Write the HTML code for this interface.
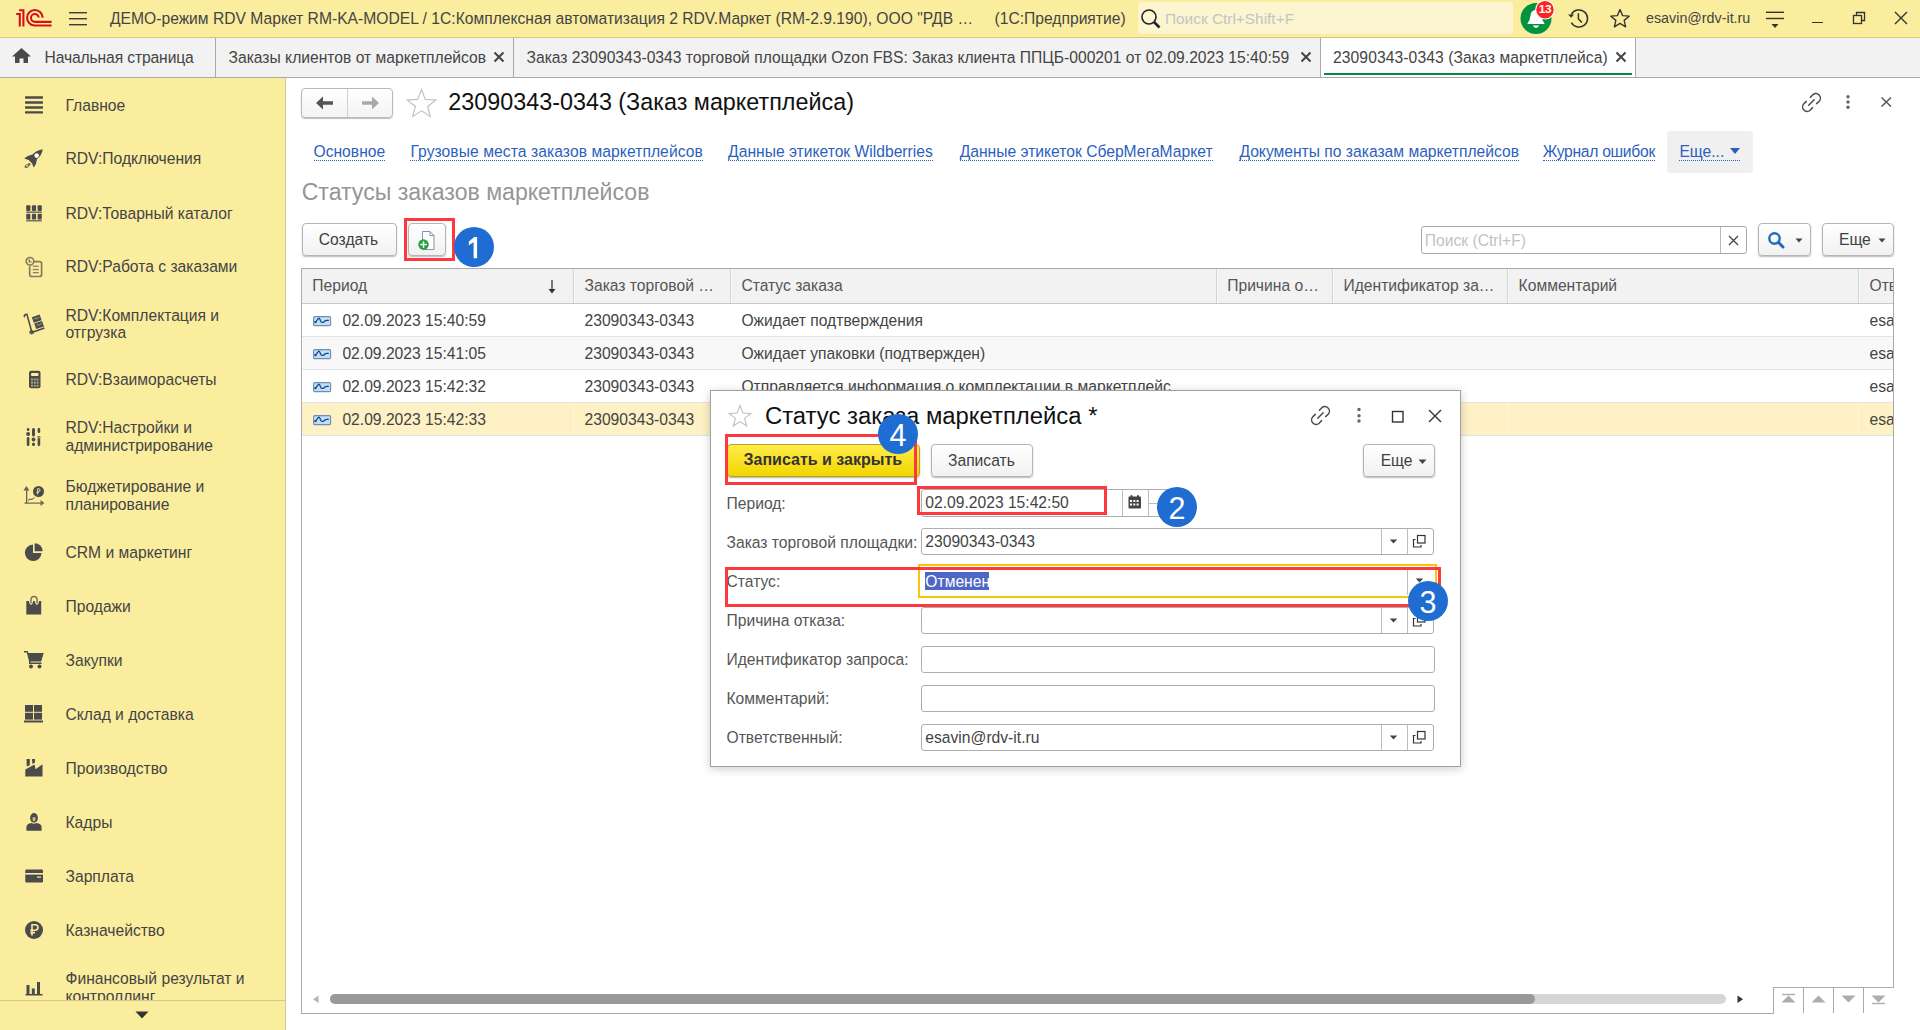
<!DOCTYPE html>
<html><head><meta charset="utf-8"><title>1C</title>
<style>
html,body{margin:0;padding:0;width:1920px;height:1030px;overflow:hidden;background:#fff;}
body{position:relative;font-family:"Liberation Sans",sans-serif;}
.a{position:absolute;}
.t{position:absolute;white-space:pre;}
.circ{width:40px;height:40px;border-radius:50%;background:#1f6cd3;color:#fff;font-size:30.5px;line-height:42px;text-align:center;font-family:"Liberation Sans",sans-serif;}
</style></head><body>
<div class="a" style="left:0px;top:0px;width:1920px;height:37px;background:#fbed9e;"></div>
<div class="a" style="left:0px;top:37px;width:1920px;height:1px;background:#d9c77a;"></div>
<svg class="a" style="left:12px;top:5px;" width="46" height="26" viewBox="0 0 46 26"><g fill="none" stroke="#d6101b" stroke-width="2.1">
<path d="M7.07 5.2 H11.4 V21.6"/><path d="M4.2 9 H7.8 V21.6"/>
<path d="M30.65 12.7 A7.8 7.8 0 1 0 22.85 20.55 H39.6"/>
<path d="M26.75 12.5 A3.9 3.9 0 1 0 22.85 16.85 H39.6"/>
</g></svg>
<svg class="a" style="left:69px;top:11px;" width="19" height="15" viewBox="0 0 19 15"><g fill="#3c3c3c"><rect x="0" y="1" width="18" height="1.4"/><rect x="0" y="7" width="18" height="1.4"/><rect x="0" y="13" width="18" height="1.4"/></g></svg>
<div class="t" style="left:110px;top:8.79px;font-size:15.65px;line-height:19.562px;color:#444444;">ДЕМО-режим RDV Маркет RM-KA-MODEL / 1С:Комплексная автоматизация 2 RDV.Маркет (RM-2.9.190), ООО "РДВ …</div>
<div class="t" style="left:994.5px;top:8.79px;font-size:15.65px;line-height:19.562px;color:#444444;">(1С:Предприятие)</div>
<div class="a" style="left:1138px;top:2px;width:375px;height:32px;background:#fdf5cf;border-radius:3px;"></div>
<svg class="a" style="left:1140px;top:8px;" width="22" height="22" viewBox="0 0 22 22"><circle cx="9" cy="9" r="7" fill="none" stroke="#222" stroke-width="1.6"/><path d="M14 14 L19.5 19.5" stroke="#222" stroke-width="2.6"/></svg>
<div class="t" style="left:1165px;top:9.04px;font-size:15.4px;line-height:19.25px;color:#c4c4c4;">Поиск Ctrl+Shift+F</div>
<svg class="a" style="left:1518px;top:0px;" width="40" height="37" viewBox="0 0 40 37"><circle cx="18" cy="18.5" r="15.5" fill="#03923f"/>
<path d="M9.3 24 Q12 21 12.5 15.5 Q13 10 18 10 Q23 10 23.5 15.5 Q24 21 26.7 24 Z" fill="#fff"/>
<path d="M14.6 25.6 H21.4 Q18 30.5 14.6 25.6Z" fill="#fff"/>
<circle cx="27" cy="9.7" r="9.3" fill="#fe2222" stroke="#ffffff" stroke-width="1.1"/></svg>
<div class="a" style="left:1535px;top:1px;width:20px;text-align:center;color:#fff;font-weight:700;font-size:11.8px;line-height:17px;letter-spacing:-0.2px;">13</div>
<svg class="a" style="left:1566px;top:6px;" width="26" height="26" viewBox="0 0 26 26"><g fill="none" stroke="#333" stroke-width="1.5"><path d="M5.4 8.4 A8.6 8.6 0 1 1 5.4 16.6"/><path d="M12.4 7.3 V13 L16 16.4"/></g><path d="M2.1 8.4 H8.1 L5.1 11.8 Z" fill="#333"/></svg>
<svg class="a" style="left:1608px;top:6px;" width="26" height="26" viewBox="0 0 26 26"><path d="M12 2.5 L14.9 9.3 L22.2 9.9 L16.6 14.6 L18.3 21.8 L12 18 L5.7 21.8 L7.4 14.6 L1.8 9.9 L9.1 9.3 Z" fill="none" stroke="#333" stroke-width="1.5" stroke-linejoin="round" transform="translate(12 12.5) scale(0.9) translate(-12 -12.5)"/></svg>
<div class="t" style="left:1646px;top:10.10px;font-size:14.3px;line-height:17.875px;color:#444444;">esavin@rdv-it.ru</div>
<svg class="a" style="left:1764px;top:10px;" width="22" height="20" viewBox="0 0 22 20"><g fill="#333"><rect x="2" y="1.6" width="18" height="1.4"/><rect x="2" y="7.8" width="18" height="1.4"/><path d="M7.5 14 H14.5 L11 18 Z"/></g></svg>
<div class="a" style="left:1812px;top:22px;width:11px;height:1.4px;background:#333;"></div>
<svg class="a" style="left:1852px;top:11px;" width="16" height="14" viewBox="0 0 16 14"><g fill="none" stroke="#333" stroke-width="1.3"><rect x="1.5" y="4.5" width="8" height="8"/><path d="M4.5 4.5 V1.5 H12.5 V9.5 H9.5"/></g></svg>
<svg class="a" style="left:1893px;top:10px;" width="16" height="16" viewBox="0 0 16 16"><path d="M2 2 L14 14 M14 2 L2 14" stroke="#333" stroke-width="1.4"/></svg>
<div class="a" style="left:0px;top:38px;width:1920px;height:39px;background:#f2f2f2;"></div>
<div class="a" style="left:0px;top:77px;width:1920px;height:1px;background:#a9a9a9;"></div>
<svg class="a" style="left:11px;top:47px;" width="21" height="18" viewBox="0 0 21 18"><path d="M10.5 1 L20 9.5 H17 V16 H12.5 V11.5 H8.5 V16 H4 V9.5 H1 Z" fill="#4a4a4a"/></svg>
<div class="t" style="left:44.5px;top:47.79px;font-size:15.65px;line-height:19.562px;color:#444444;letter-spacing:-0.12px;">Начальная страница</div>
<div class="a" style="left:215px;top:38px;width:1px;height:39px;background:#a9a9a9;"></div>
<div class="t" style="left:228.5px;top:47.79px;font-size:15.65px;line-height:19.562px;color:#444444;">Заказы клиентов от маркетплейсов</div>
<svg class="a" style="left:493px;top:51px;" width="12" height="12" viewBox="0 0 12 12"><path d="M1.5 1.5 L10.5 10.5 M10.5 1.5 L1.5 10.5" stroke="#444" stroke-width="2"/></svg>
<div class="a" style="left:513px;top:38px;width:1px;height:39px;background:#a9a9a9;"></div>
<div class="t" style="left:526.5px;top:47.79px;font-size:15.65px;line-height:19.562px;color:#444444;">Заказ 23090343-0343 торговой площадки Ozon FBS: Заказ клиента ППЦБ-000201 от 02.09.2023 15:40:59</div>
<svg class="a" style="left:1300px;top:51px;" width="12" height="12" viewBox="0 0 12 12"><path d="M1.5 1.5 L10.5 10.5 M10.5 1.5 L1.5 10.5" stroke="#444" stroke-width="2"/></svg>
<div class="a" style="left:1320px;top:38px;width:1px;height:39px;background:#a9a9a9;"></div>
<div class="a" style="left:1321px;top:38px;width:314px;height:39px;background:#ffffff;"></div>
<div class="t" style="left:1333px;top:47.79px;font-size:15.65px;line-height:19.562px;color:#444444;letter-spacing:0.09px;">23090343-0343 (Заказ маркетплейса)</div>
<svg class="a" style="left:1615px;top:51px;" width="12" height="12" viewBox="0 0 12 12"><path d="M1.5 1.5 L10.5 10.5 M10.5 1.5 L1.5 10.5" stroke="#444" stroke-width="2"/></svg>
<div class="a" style="left:1324px;top:73px;width:308px;height:2px;background:#008a3a;"></div>
<div class="a" style="left:1635px;top:38px;width:1px;height:39px;background:#a9a9a9;"></div>
<div class="a" style="left:0px;top:78px;width:285px;height:952px;background:#fbed9e;"></div>
<div class="a" style="left:285px;top:78px;width:1px;height:952px;background:#d5c98f;"></div>
<div class="a" style="left:0px;top:1000px;width:285px;height:1px;background:#d5c98f;"></div>
<svg class="a" style="left:134px;top:1010px;" width="16" height="10" viewBox="0 0 16 10"><path d="M1.5 1.5 H14.5 L8 8.5 Z" fill="#333"/></svg>
<div class="a" style="left:0;top:78px;width:285px;height:922px;overflow:hidden;">
<div class="t" style="left:65.5px;top:17.79px;font-size:15.65px;line-height:19.562px;color:#444444;">Главное</div>
<div class="t" style="left:65.5px;top:71.29px;font-size:15.65px;line-height:19.562px;color:#444444;">RDV:Подключения</div>
<div class="t" style="left:65.5px;top:125.59px;font-size:15.65px;line-height:19.562px;color:#444444;">RDV:Товарный каталог</div>
<div class="t" style="left:65.5px;top:178.99px;font-size:15.65px;line-height:19.562px;color:#444444;">RDV:Работа с заказами</div>
<div class="t" style="left:65.5px;top:227.59px;font-size:15.65px;line-height:19.562px;color:#444444;">RDV:Комплектация и</div>
<div class="t" style="left:65.5px;top:245.49px;font-size:15.65px;line-height:19.562px;color:#444444;">отгрузка</div>
<div class="t" style="left:65.5px;top:292.39px;font-size:15.65px;line-height:19.562px;color:#444444;">RDV:Взаиморасчеты</div>
<div class="t" style="left:65.5px;top:340.19px;font-size:15.65px;line-height:19.562px;color:#444444;">RDV:Настройки и</div>
<div class="t" style="left:65.5px;top:358.09px;font-size:15.65px;line-height:19.562px;color:#444444;">администрирование</div>
<div class="t" style="left:65.5px;top:398.89px;font-size:15.65px;line-height:19.562px;color:#444444;">Бюджетирование и</div>
<div class="t" style="left:65.5px;top:416.79px;font-size:15.65px;line-height:19.562px;color:#444444;">планирование</div>
<div class="t" style="left:65.5px;top:464.79px;font-size:15.65px;line-height:19.562px;color:#444444;">CRM и маркетинг</div>
<div class="t" style="left:65.5px;top:518.79px;font-size:15.65px;line-height:19.562px;color:#444444;">Продажи</div>
<div class="t" style="left:65.5px;top:572.79px;font-size:15.65px;line-height:19.562px;color:#444444;">Закупки</div>
<div class="t" style="left:65.5px;top:626.79px;font-size:15.65px;line-height:19.562px;color:#444444;">Склад и доставка</div>
<div class="t" style="left:65.5px;top:680.79px;font-size:15.65px;line-height:19.562px;color:#444444;">Производство</div>
<div class="t" style="left:65.5px;top:734.79px;font-size:15.65px;line-height:19.562px;color:#444444;">Кадры</div>
<div class="t" style="left:65.5px;top:788.79px;font-size:15.65px;line-height:19.562px;color:#444444;">Зарплата</div>
<div class="t" style="left:65.5px;top:842.79px;font-size:15.65px;line-height:19.562px;color:#444444;">Казначейство</div>
<div class="t" style="left:65.5px;top:890.79px;font-size:15.65px;line-height:19.562px;color:#444444;">Финансовый результат и</div>
<div class="t" style="left:65.5px;top:908.69px;font-size:15.65px;line-height:19.562px;color:#444444;">контроллинг</div>
</div>
<svg class="a" style="left:25px;top:96px;" width="18" height="18" viewBox="0 0 18 18"><g fill="#4b4b4b"><rect x="0" y="0.3" width="18" height="2.4" rx="0.6"/><rect x="0" y="5.3" width="18" height="2.4" rx="0.6"/><rect x="0" y="10.3" width="18" height="2.4" rx="0.6"/><rect x="0" y="15.2" width="18" height="2.4" rx="0.6"/></g></svg>
<svg class="a" style="left:24px;top:148px;" width="20" height="21" viewBox="0 0 20 21"><path d="M18.8 1.2 Q12.5 2 8.6 6.5 L4.5 7.8 Q1.8 8.8 0.3 10.5 L4.6 11.9 L8 15.3 L9.6 19.5 Q11.2 17.8 12.1 15.6 L12.9 11.3 Q17.8 7.5 18.8 1.2 Z" fill="#4b4b4b"/><circle cx="12.7" cy="7.6" r="2.3" fill="#fff"/><path d="M5.6 14.8 L6.8 16.3 L3.3 19.9 L0.6 19.7 L0.9 17.3 Z" fill="#4b4b4b" opacity="0.8"/><circle cx="3" cy="17.6" r="0.9" fill="#fbed9e"/></svg>
<svg class="a" style="left:25px;top:204px;" width="18" height="19" viewBox="0 0 18 19"><g fill="#4b4b4b"><rect x="1.2" y="1.3" width="4.2" height="5.6" rx="0.9"/><rect x="6.9" y="1.3" width="4.2" height="5.6" rx="0.9"/><rect x="12.6" y="1.3" width="4.2" height="5.6" rx="0.9"/><rect x="1.2" y="9.8" width="4.2" height="5.6" rx="0.9"/><rect x="6.9" y="9.8" width="4.2" height="5.6" rx="0.9"/><rect x="12.6" y="9.8" width="4.2" height="5.6" rx="0.9"/></g><g fill="#4b4b4b" opacity="0.75"><rect x="1.2" y="7.4" width="15.6" height="1.6"/><rect x="1.2" y="15.9" width="15.6" height="1.6"/></g></svg>
<svg class="a" style="left:24px;top:256px;" width="20" height="22" viewBox="0 0 20 22"><g fill="none" stroke="#6f6a55" stroke-width="1.7" opacity="0.85"><circle cx="6" cy="5.3" r="3.8"/><path d="M9.8 5.6 H15.6 Q17.6 5.6 17.6 7.6 V18.5 Q17.6 20.5 15.6 20.5 H7.7 Q5.7 20.5 5.7 18.5 V10.3"/></g><g fill="#6f6a55" opacity="0.8"><rect x="8.8" y="9.6" width="6" height="1.3"/><rect x="8.8" y="12.9" width="6" height="1.3"/><rect x="8.8" y="16" width="6" height="1.3"/><path d="M5.3 3.3 V5.8 H7.5" stroke="#555" stroke-width="1.2" fill="none"/></g></svg>
<svg class="a" style="left:18px;top:306px;" width="30" height="32" viewBox="0 0 30 32"><g fill="none" stroke="#4b4b4b" stroke-linecap="round"><path d="M6.3 10.8 Q6.3 8.3 8.9 8.3 L13.8 26" stroke-width="1.5"/><path d="M14.5 26.3 L25.8 22.2" stroke-width="1.7"/></g><g fill="#4b4b4b"><circle cx="13.6" cy="26.3" r="2.3" opacity="0.85"/><path d="M13.8 11.2 L21.6 8.6 L23.6 14.2 L15.8 16.8 Z"/><path d="M16.2 17.5 L24 14.9 L26 20.5 L18.2 23.1 Z"/></g><g fill="none" stroke="#fbed9e" stroke-width="0.9" opacity="0.6"><path d="M16.3 12.9 L18.5 12.1 L19 13.6 M19.6 11.9 L21.3 11.3"/><path d="M18.7 19.2 L20.9 18.4 L21.4 19.9 M22 18.2 L23.7 17.6"/></g></svg>
<svg class="a" style="left:25px;top:370px;" width="18" height="20" viewBox="0 0 18 20"><rect x="4" y="0.8" width="11.5" height="17.5" rx="2" fill="#4b4b4b"/><rect x="6" y="3" width="7.5" height="3" rx="1" fill="#fbed9e"/><g fill="#fbed9e" opacity="0.55"><rect x="6" y="8.5" width="2" height="2"/><rect x="8.8" y="8.5" width="2" height="2"/><rect x="11.6" y="8.5" width="2" height="2"/><rect x="6" y="11.6" width="2" height="2"/><rect x="8.8" y="11.6" width="2" height="2"/><rect x="11.6" y="11.6" width="2" height="2"/><rect x="6" y="14.7" width="2" height="2"/><rect x="8.8" y="14.7" width="2" height="2"/><rect x="11.6" y="14.7" width="2" height="2"/></g></svg>
<svg class="a" style="left:25px;top:427px;" width="18" height="20" viewBox="0 0 18 20"><g fill="#4b4b4b"><rect x="7" y="1" width="3" height="8.5" rx="1.5"/><circle cx="8.5" cy="12.5" r="1.9"/><rect x="7" y="15.5" width="3" height="3.5" rx="1.5"/><rect x="1.8" y="1" width="2.6" height="3" rx="1.3"/><circle cx="3.1" cy="6.9" r="2"/><rect x="1.8" y="10" width="2.6" height="9" rx="1.3"/><rect x="12.6" y="1" width="2.6" height="5" rx="1.3"/><path d="M11.6 10.5 Q13.9 7.5 16.2 10.5 Z"/><rect x="12.6" y="11" width="2.6" height="8" rx="1.3"/></g></svg>
<svg class="a" style="left:23px;top:484px;" width="22" height="22" viewBox="0 0 22 22"><g fill="#4b4b4b"><path d="M3.4 2 L6.5 6.5 H4.3 V19.5 H3 V6.5 H0.4 Z" opacity="0.85"/><path d="M1.5 18.5 H17.5 V16 L21.5 19 L17.5 22 V19.8 H1.5 Z" opacity="0.8"/><circle cx="15.5" cy="7.5" r="5.5"/><path d="M5 16.5 L7 15 L9 15.5 L11.5 13.5" stroke="#4b4b4b" stroke-width="1" fill="none"/></g><path d="M14.5 4.5 V10.5 M13.3 8.5 H16 M14.5 4.8 H15.8 Q17 4.8 17 6.2 Q17 7.3 15.8 7.3 H14" stroke="#fbed9e" stroke-width="1.1" fill="none" opacity="0.8"/></svg>
<svg class="a" style="left:24px;top:542px;" width="20" height="20" viewBox="0 0 20 20"><path d="M9 2.5 A8.3 8.3 0 1 0 17.5 11 H9 Z" fill="#4b4b4b"/><path d="M10.6 1.2 A8 8 0 0 1 18.7 9.3 H10.6 Z" fill="#4b4b4b"/></svg>
<svg class="a" style="left:20px;top:592px;" width="28" height="26" viewBox="0 0 28 26"><path d="M6.3 9.1 H8.9 Q9.3 12.7 11 12.7 Q12.7 12.7 13.1 9.1 H14.8 Q15.2 12.7 17 12.7 Q18.7 12.7 19 9.1 H21.2 V22.5 H6.3 Z" fill="#4b4b4b"/><path d="M10.9 11.5 V8.2 Q10.9 4.6 14 4.6 Q17.1 4.6 17.1 8.2 V11.5" fill="none" stroke="#4b4b4b" stroke-width="1.5" opacity="0.75"/></svg>
<svg class="a" style="left:23px;top:650px;" width="22" height="20" viewBox="0 0 22 20"><g fill="#4b4b4b"><path d="M1 1 H4.5 L5.5 3 H20.5 L18 11.5 H7.5 L7.5 12.5 H18.5 V14 H6 V11 L3.8 2.5 H1 Z"/><path d="M5 3 H20.5 L18.2 10.8 H7 Z"/><circle cx="8" cy="16.5" r="2"/><circle cx="16.5" cy="16.5" r="2"/></g></svg>
<svg class="a" style="left:23px;top:704px;" width="22" height="20" viewBox="0 0 22 20"><g fill="#4b4b4b"><rect x="2" y="1" width="8" height="6.8"/><rect x="11" y="1" width="8" height="6.8"/><rect x="2" y="8.8" width="8" height="6.8"/><rect x="11" y="8.8" width="8" height="6.8"/><rect x="1" y="16.5" width="19" height="2"/></g></svg>
<svg class="a" style="left:20px;top:754px;" width="28" height="26" viewBox="0 0 28 26"><g fill="#4b4b4b"><path d="M5.3 15.5 L14.5 10.6 L15.6 15.3 L22.5 10.3 V22.6 H5.3 Z"/><path d="M6.5 5 H9.8 V11.3 L6.8 12.6 Z"/><path d="M12 5 H15 V8.6 L12.4 9.9 Z"/></g></svg>
<svg class="a" style="left:20px;top:808px;" width="28" height="26" viewBox="0 0 28 26"><ellipse cx="14" cy="9.9" rx="3.9" ry="4.8" fill="#4b4b4b"/><path d="M12.4 9.6 Q14 8.7 15.6 9.6 L15.1 12.8 Q14 13.9 12.9 12.8 Z" fill="#fbed9e" opacity="0.75"/><path d="M6.4 22.8 V19.2 Q6.4 16.6 9.4 15.6 L11.6 15 Q14 16.4 16.4 15 L18.6 15.6 Q21.6 16.6 21.6 19.2 V22.8 Z" fill="#4b4b4b"/></svg>
<svg class="a" style="left:24px;top:868px;" width="20" height="16" viewBox="0 0 20 16"><rect x="1.3" y="1.5" width="17.7" height="13" rx="1.2" fill="#4b4b4b"/><rect x="1.3" y="5" width="17.7" height="1.6" fill="#fbed9e"/><rect x="13" y="8.5" width="4" height="1.2" fill="#fbed9e"/></svg>
<svg class="a" style="left:24px;top:920px;" width="20" height="20" viewBox="0 0 20 20"><circle cx="10" cy="10" r="9" fill="#4b4b4b"/><path d="M8 15.5 V4.8 H11.2 Q14 4.8 14 7.6 Q14 10.2 11.2 10.2 H6.3 M6.3 12.6 H11" stroke="#fbed9e" stroke-width="1.6" fill="none"/></svg>
<svg class="a" style="left:24px;top:979px;" width="20" height="18" viewBox="0 0 20 18"><g fill="#4b4b4b"><rect x="2.5" y="6" width="3" height="10"/><rect x="7.8" y="9.5" width="3" height="6.5"/><rect x="13" y="3" width="3" height="13"/><rect x="1.5" y="15" width="17" height="1.5"/></g></svg>
<div class="a" style="left:286px;top:78px;width:1634px;height:952px;background:#fff;"></div>
<div class="a" style="left:301px;top:88px;width:92px;height:30px;box-sizing:border-box;border:1px solid #b8b8b8;border-radius:4px;background:linear-gradient(#fff,#f3f3f3);box-shadow:0 1px 1px rgba(0,0,0,0.25);"></div>
<div class="a" style="left:347px;top:89px;width:1px;height:28px;background:#d0d0d0;"></div>
<svg class="a" style="left:315px;top:96px;" width="20" height="16" viewBox="0 0 20 16"><path d="M1 7 L8 0.5 V5.2 H18 V8.8 H8 V13.5 Z" fill="#555"/></svg>
<svg class="a" style="left:360px;top:96px;" width="20" height="16" viewBox="0 0 20 16"><path d="M19 7 L12 0.5 V5.2 H2 V8.8 H12 V13.5 Z" fill="#a9a9a9"/></svg>
<svg class="a" style="left:405px;top:87px;" width="33" height="32" viewBox="0 0 33 32"><path d="M16.5 2.5 L20.3 12.4 L30.8 12.9 L22.6 19.5 L25.4 29.6 L16.5 23.8 L7.6 29.6 L10.4 19.5 L2.2 12.9 L12.7 12.4 Z" fill="none" stroke="#b9c0c7" stroke-width="1.1" stroke-linejoin="miter"/></svg>
<div class="t" style="left:448.3px;top:88.01px;font-size:23.35px;line-height:29.188px;color:#111;">23090343-0343 (Заказ маркетплейса)</div>
<svg class="a" style="left:1797px;top:88px;" width="30" height="30" viewBox="0 0 30 30"><g fill="none" stroke="#4a4a4a" stroke-width="1.5" stroke-linecap="round"><path d="M13.4 9.3 L15.82 6.82 A4.5 4.5 0 0 1 22.18 13.18 L19.6 15.6"/><path d="M15.6 19.6 L13.18 22.18 A4.5 4.5 0 0 1 6.82 15.82 L9.3 13.4"/><path d="M11.7 17.2 L17.2 11.7"/></g></svg>
<svg class="a" style="left:1844px;top:94px;" width="8" height="16" viewBox="0 0 8 16"><g fill="#666"><circle cx="4" cy="2.7" r="1.7"/><circle cx="4" cy="8" r="1.7"/><circle cx="4" cy="13.3" r="1.7"/></g></svg>
<svg class="a" style="left:1880px;top:96px;" width="13" height="12" viewBox="0 0 13 12"><path d="M1.5 1.5 L11 10.5 M11 1.5 L1.5 10.5" stroke="#555" stroke-width="1.5"/></svg>
<div class="a" style="left:1667px;top:131px;width:86px;height:42px;background:#f0f0f0;border-radius:4px;"></div>
<div class="t" style="left:313.5px;top:143.87px;font-size:15.65px;line-height:16.2px;color:#2b5fbd;border-bottom:1px dotted #2b5fbd;padding-bottom:0px;">Основное</div>
<div class="t" style="left:410.4px;top:143.87px;font-size:15.65px;line-height:16.2px;color:#2b5fbd;border-bottom:1px dotted #2b5fbd;padding-bottom:0px;"><span style="letter-spacing:0.07px">Грузовые места заказов маркетплейсов</span></div>
<div class="t" style="left:728.1px;top:143.87px;font-size:15.65px;line-height:16.2px;color:#2b5fbd;border-bottom:1px dotted #2b5fbd;padding-bottom:0px;">Данные этикеток Wildberries</div>
<div class="t" style="left:959.7px;top:143.87px;font-size:15.65px;line-height:16.2px;color:#2b5fbd;border-bottom:1px dotted #2b5fbd;padding-bottom:0px;">Данные этикеток СберМегаМаркет</div>
<div class="t" style="left:1239.4px;top:143.87px;font-size:15.65px;line-height:16.2px;color:#2b5fbd;border-bottom:1px dotted #2b5fbd;padding-bottom:0px;">Документы по заказам маркетплейсов</div>
<div class="t" style="left:1542.7px;top:143.87px;font-size:15.65px;line-height:16.2px;color:#2b5fbd;border-bottom:1px dotted #2b5fbd;padding-bottom:0px;"><span style="letter-spacing:-0.28px">Журнал ошибок</span></div>
<div class="t" style="left:1679.4px;top:143.87px;font-size:15.65px;line-height:16.2px;color:#2b5fbd;border-bottom:1px dotted #2b5fbd;padding-bottom:0px;">Еще... <span style="display:inline-block;width:0;height:0;border-left:5px solid transparent;border-right:5px solid transparent;border-top:6px solid #2b5fbd;vertical-align:3px;margin-left:1px"></span></div>
<div class="t" style="left:301.7px;top:178.25px;font-size:23.1px;line-height:28.875px;color:#959595;">Статусы заказов маркетплейсов</div>
<div class="a" style="left:301.5px;top:223px;width:95px;height:33px;box-sizing:border-box;border:1px solid #b5b5b5;border-radius:4px;background:linear-gradient(#ffffff,#f1f1f1);box-shadow:0 1px 1.5px rgba(0,0,0,0.28);"></div>
<div class="t" style="left:318.8px;top:229.79px;font-size:15.65px;line-height:19.562px;color:#404040;">Создать</div>
<div class="a" style="left:408px;top:223px;width:38px;height:33px;box-sizing:border-box;border:1px solid #b5b5b5;border-radius:4px;background:linear-gradient(#ffffff,#f1f1f1);box-shadow:0 1px 1.5px rgba(0,0,0,0.28);"></div>
<svg class="a" style="left:418px;top:229px;" width="20" height="24" viewBox="0 0 20 24"><path d="M4.5 2.5 H12 L16 6.5 V20.5 H4.5 Z" fill="#fff" stroke="#8095a8" stroke-width="1"/><path d="M12 2.5 V6.5 H16" fill="none" stroke="#8095a8" stroke-width="1"/><circle cx="5.5" cy="15.5" r="5.2" fill="#22a33a"/><path d="M5.5 12.3 V18.7 M2.3 15.5 H8.7" stroke="#fff" stroke-width="1.5"/></svg>
<div class="a" style="left:1421px;top:226px;width:326px;height:28px;box-sizing:border-box;border:1px solid #a8a8a8;border-radius:3px;background:#fff;"></div>
<div class="a" style="left:1720px;top:227px;width:1px;height:26px;background:#b8b8b8;"></div>
<div class="t" style="left:1424.8px;top:230.69px;font-size:15.65px;line-height:19.562px;color:#c2c2c2;">Поиск (Ctrl+F)</div>
<svg class="a" style="left:1727px;top:234px;" width="14" height="14" viewBox="0 0 14 14"><path d="M2 2 L11 11 M11 2 L2 11" stroke="#444" stroke-width="1.3"/></svg>
<div class="a" style="left:1758px;top:223px;width:53px;height:33px;box-sizing:border-box;border:1px solid #b5b5b5;border-radius:4px;background:linear-gradient(#ffffff,#f1f1f1);box-shadow:0 1px 1.5px rgba(0,0,0,0.28);"></div>
<svg class="a" style="left:1767px;top:231px;" width="20" height="20" viewBox="0 0 20 20"><circle cx="7.5" cy="7.5" r="5.2" fill="none" stroke="#1f6ab8" stroke-width="2.4"/><path d="M11.3 11.3 L16 16" stroke="#1f6ab8" stroke-width="3" stroke-linecap="round"/></svg>
<svg class="a" style="left:1795px;top:238px;" width="8" height="5" viewBox="0 0 8 5"><path d="M0.5 0.5 H7.5 L4 4.5 Z" fill="#444"/></svg>
<div class="a" style="left:1822px;top:223px;width:72px;height:33px;box-sizing:border-box;border:1px solid #b5b5b5;border-radius:4px;background:linear-gradient(#ffffff,#f1f1f1);box-shadow:0 1px 1.5px rgba(0,0,0,0.28);"></div>
<div class="t" style="left:1839px;top:229.79px;font-size:15.65px;line-height:19.562px;color:#404040;">Еще</div>
<svg class="a" style="left:1878px;top:238px;" width="8" height="5" viewBox="0 0 8 5"><path d="M0.5 0.5 H7.5 L4 4.5 Z" fill="#444"/></svg>
<div class="a" style="left:301px;top:268px;width:1593px;height:746px;box-sizing:border-box;border:1px solid #aaaaaa;background:#fff;"></div>
<div class="a" style="left:302px;top:269px;width:1591px;height:34px;background:#f2f2f2;"></div>
<div class="a" style="left:302px;top:303px;width:1591px;height:1px;background:#c8c8c8;"></div>
<div class="a" style="left:573px;top:269px;width:1px;height:34px;background:#d4d4d4;"></div>
<div class="a" style="left:574px;top:269px;width:1px;height:34px;background:#fafafa;"></div>
<div class="a" style="left:730px;top:269px;width:1px;height:34px;background:#d4d4d4;"></div>
<div class="a" style="left:731px;top:269px;width:1px;height:34px;background:#fafafa;"></div>
<div class="a" style="left:1216px;top:269px;width:1px;height:34px;background:#d4d4d4;"></div>
<div class="a" style="left:1217px;top:269px;width:1px;height:34px;background:#fafafa;"></div>
<div class="a" style="left:1332px;top:269px;width:1px;height:34px;background:#d4d4d4;"></div>
<div class="a" style="left:1333px;top:269px;width:1px;height:34px;background:#fafafa;"></div>
<div class="a" style="left:1507px;top:269px;width:1px;height:34px;background:#d4d4d4;"></div>
<div class="a" style="left:1508px;top:269px;width:1px;height:34px;background:#fafafa;"></div>
<div class="a" style="left:1858px;top:269px;width:1px;height:34px;background:#d4d4d4;"></div>
<div class="a" style="left:1859px;top:269px;width:1px;height:34px;background:#fafafa;"></div>
<div class="t" style="left:312.3px;top:275.79px;font-size:15.65px;line-height:19.562px;color:#555555;">Период</div>
<div class="t" style="left:584.5px;top:275.79px;font-size:15.65px;line-height:19.562px;color:#555555;">Заказ торговой …</div>
<div class="t" style="left:741.4px;top:275.79px;font-size:15.65px;line-height:19.562px;color:#555555;">Статус заказа</div>
<div class="t" style="left:1227.2px;top:275.79px;font-size:15.65px;line-height:19.562px;color:#555555;">Причина о…</div>
<div class="t" style="left:1343.5px;top:275.79px;font-size:15.65px;line-height:19.562px;color:#555555;">Идентификатор за…</div>
<div class="t" style="left:1518.6px;top:275.79px;font-size:15.65px;line-height:19.562px;color:#555555;">Комментарий</div>
<svg class="a" style="left:546px;top:279px;" width="12" height="16" viewBox="0 0 12 16"><path d="M6 1 V13" stroke="#333" stroke-width="1.3"/><path d="M2.5 10 L6 14.5 L9.5 10 Z" fill="#333"/></svg>
<div class="a" style="left:302px;top:269px;width:1591px;height:744px;overflow:hidden;">
<div class="t" style="left:1567.5px;top:6.79px;font-size:15.65px;line-height:19.562px;color:#555555;">Ответственный</div>
<div class="a" style="left:0px;top:35px;width:1591px;height:32px;background:#ffffff;"></div>
<div class="a" style="left:0px;top:67px;width:1591px;height:1px;background:#e3e3e3;"></div>
<svg class="a" style="left:11px;top:47px;" width="19" height="11" viewBox="0 0 19 11"><rect x="0.6" y="0.6" width="17" height="9" rx="1.2" fill="#c4ddf3" stroke="#6f8fae" stroke-width="1.1"/><path d="M2.6 6.1 L5.4 2.4 Q6.2 1.6 6.9 3.2 L7.8 5.5 Q8.4 6.6 10 6.3 L11.3 5.6 Q12.6 4.4 14 4.4 H15.3" fill="none" stroke="#0b4d98" stroke-width="1.3" stroke-linecap="round"/><circle cx="2.4" cy="6.1" r="1.2" fill="#0b4d98"/></svg>
<div class="t" style="left:40.39999999999998px;top:41.79px;font-size:15.65px;line-height:19.562px;color:#444444;">02.09.2023 15:40:59</div>
<div class="t" style="left:282.5px;top:41.79px;font-size:15.65px;line-height:19.562px;color:#444444;">23090343-0343</div>
<div class="t" style="left:439.4px;top:41.79px;font-size:15.65px;line-height:19.562px;color:#444444;">Ожидает подтверждения</div>
<div class="t" style="left:1567.5px;top:41.79px;font-size:15.65px;line-height:19.562px;color:#444444;">esavin@rdv-it.ru</div>
<div class="a" style="left:0px;top:68px;width:1591px;height:32px;background:#f8f8f8;"></div>
<div class="a" style="left:0px;top:100px;width:1591px;height:1px;background:#e3e3e3;"></div>
<svg class="a" style="left:11px;top:80px;" width="19" height="11" viewBox="0 0 19 11"><rect x="0.6" y="0.6" width="17" height="9" rx="1.2" fill="#c4ddf3" stroke="#6f8fae" stroke-width="1.1"/><path d="M2.6 6.1 L5.4 2.4 Q6.2 1.6 6.9 3.2 L7.8 5.5 Q8.4 6.6 10 6.3 L11.3 5.6 Q12.6 4.4 14 4.4 H15.3" fill="none" stroke="#0b4d98" stroke-width="1.3" stroke-linecap="round"/><circle cx="2.4" cy="6.1" r="1.2" fill="#0b4d98"/></svg>
<div class="t" style="left:40.39999999999998px;top:74.79px;font-size:15.65px;line-height:19.562px;color:#444444;">02.09.2023 15:41:05</div>
<div class="t" style="left:282.5px;top:74.79px;font-size:15.65px;line-height:19.562px;color:#444444;">23090343-0343</div>
<div class="t" style="left:439.4px;top:74.79px;font-size:15.65px;line-height:19.562px;color:#444444;">Ожидает упаковки (подтвержден)</div>
<div class="t" style="left:1567.5px;top:74.79px;font-size:15.65px;line-height:19.562px;color:#444444;">esavin@rdv-it.ru</div>
<div class="a" style="left:0px;top:101px;width:1591px;height:32px;background:#ffffff;"></div>
<div class="a" style="left:0px;top:133px;width:1591px;height:1px;background:#e3e3e3;"></div>
<svg class="a" style="left:11px;top:113px;" width="19" height="11" viewBox="0 0 19 11"><rect x="0.6" y="0.6" width="17" height="9" rx="1.2" fill="#c4ddf3" stroke="#6f8fae" stroke-width="1.1"/><path d="M2.6 6.1 L5.4 2.4 Q6.2 1.6 6.9 3.2 L7.8 5.5 Q8.4 6.6 10 6.3 L11.3 5.6 Q12.6 4.4 14 4.4 H15.3" fill="none" stroke="#0b4d98" stroke-width="1.3" stroke-linecap="round"/><circle cx="2.4" cy="6.1" r="1.2" fill="#0b4d98"/></svg>
<div class="t" style="left:40.39999999999998px;top:107.79px;font-size:15.65px;line-height:19.562px;color:#444444;">02.09.2023 15:42:32</div>
<div class="t" style="left:282.5px;top:107.79px;font-size:15.65px;line-height:19.562px;color:#444444;">23090343-0343</div>
<div class="t" style="left:439.4px;top:107.79px;font-size:15.65px;line-height:19.562px;color:#444444;">Отправляется информация о комплектации в маркетплейс</div>
<div class="t" style="left:1567.5px;top:107.79px;font-size:15.65px;line-height:19.562px;color:#444444;">esavin@rdv-it.ru</div>
<div class="a" style="left:0px;top:134px;width:1591px;height:32px;background:#fdf1c5;"></div>
<div class="a" style="left:0px;top:166px;width:1591px;height:1px;background:#e3e3e3;"></div>
<div class="a" style="left:271px;top:134px;width:1px;height:32px;background:#fff8dc;"></div>
<div class="a" style="left:914px;top:134px;width:1px;height:32px;background:#fff8dc;"></div>
<div class="a" style="left:1030px;top:134px;width:1px;height:32px;background:#fff8dc;"></div>
<div class="a" style="left:1205px;top:134px;width:1px;height:32px;background:#fff8dc;"></div>
<div class="a" style="left:1556px;top:134px;width:1px;height:32px;background:#fff8dc;"></div>
<svg class="a" style="left:11px;top:146px;" width="19" height="11" viewBox="0 0 19 11"><rect x="0.6" y="0.6" width="17" height="9" rx="1.2" fill="#c4ddf3" stroke="#6f8fae" stroke-width="1.1"/><path d="M2.6 6.1 L5.4 2.4 Q6.2 1.6 6.9 3.2 L7.8 5.5 Q8.4 6.6 10 6.3 L11.3 5.6 Q12.6 4.4 14 4.4 H15.3" fill="none" stroke="#0b4d98" stroke-width="1.3" stroke-linecap="round"/><circle cx="2.4" cy="6.1" r="1.2" fill="#0b4d98"/></svg>
<div class="t" style="left:40.39999999999998px;top:140.79px;font-size:15.65px;line-height:19.562px;color:#444444;">02.09.2023 15:42:33</div>
<div class="t" style="left:282.5px;top:140.79px;font-size:15.65px;line-height:19.562px;color:#444444;">23090343-0343</div>
<div class="t" style="left:439.4px;top:140.79px;font-size:15.65px;line-height:19.562px;color:#444444;">Отменен</div>
<div class="t" style="left:1567.5px;top:140.79px;font-size:15.65px;line-height:19.562px;color:#444444;">esavin@rdv-it.ru</div>
</div>
<svg class="a" style="left:312px;top:995px;" width="8" height="9" viewBox="0 0 8 9"><path d="M6.5 0.5 V8 L1 4.25 Z" fill="#b5b5b5"/></svg>
<div class="a" style="left:330px;top:994px;width:1396px;height:10px;background:#d6d6d6;border-radius:5px;"></div>
<div class="a" style="left:330px;top:994px;width:1205px;height:10px;background:#999999;border-radius:5px;"></div>
<svg class="a" style="left:1736px;top:995px;" width="8" height="9" viewBox="0 0 8 9"><path d="M1.5 0.5 V8 L7 4.25 Z" fill="#333"/></svg>
<div class="a" style="left:1773px;top:987px;width:121px;height:27px;box-sizing:border-box;border:1px solid #aaaaaa;border-bottom:none;border-right:none;background:#fff;"></div>
<div class="a" style="left:1803px;top:987px;width:1px;height:26px;background:#aaaaaa;"></div>
<div class="a" style="left:1833px;top:987px;width:1px;height:26px;background:#aaaaaa;"></div>
<div class="a" style="left:1863px;top:987px;width:1px;height:26px;background:#aaaaaa;"></div>
<svg class="a" style="left:1774px;top:988px;" width="29" height="25" viewBox="0 0 29 25"><path d="M8 6.5 H21" stroke="#adadad" stroke-width="1.4"/><path d="M14.5 7.5 L21.5 14.5 H7.5 Z" fill="#adadad"/></svg>
<svg class="a" style="left:1804px;top:988px;" width="29" height="25" viewBox="0 0 29 25"><path d="M14.5 7.5 L21.5 14.5 H7.5 Z" fill="#adadad"/></svg>
<svg class="a" style="left:1834px;top:988px;" width="29" height="25" viewBox="0 0 29 25"><path d="M14.5 14.5 L21.5 7.5 H7.5 Z" fill="#adadad"/></svg>
<svg class="a" style="left:1864px;top:988px;" width="29" height="25" viewBox="0 0 29 25"><path d="M14.5 14.5 L21.5 7.5 H7.5 Z" fill="#adadad"/><path d="M8 15.5 H21" stroke="#adadad" stroke-width="1.4"/></svg>
<div class="a" style="left:710px;top:390px;width:751px;height:377px;box-sizing:border-box;border:1px solid #a0a0a0;background:#fff;box-shadow:0 2px 9px rgba(0,0,0,0.2);"></div>
<svg class="a" style="left:727px;top:404px;" width="26" height="24" viewBox="0 0 26 24"><path d="M13 1.5 L15.9 9 L23.8 9.4 L17.6 14.4 L19.7 22 L13 17.6 L6.3 22 L8.4 14.4 L2.2 9.4 L10.1 9 Z" fill="none" stroke="#b9c0c7" stroke-width="1.1"/></svg>
<div class="t" style="left:765px;top:401.03px;font-size:23.85px;line-height:29.812px;color:#111;">Статус заказа маркетплейса *</div>
<svg class="a" style="left:1306px;top:401px;" width="30" height="30" viewBox="0 0 30 30"><g fill="none" stroke="#4a4a4a" stroke-width="1.5" stroke-linecap="round"><path d="M13.4 9.3 L15.82 6.82 A4.5 4.5 0 0 1 22.18 13.18 L19.6 15.6"/><path d="M15.6 19.6 L13.18 22.18 A4.5 4.5 0 0 1 6.82 15.82 L9.3 13.4"/><path d="M11.7 17.2 L17.2 11.7"/></g></svg>
<svg class="a" style="left:1355px;top:406px;" width="8" height="18" viewBox="0 0 8 18"><g fill="#666"><circle cx="4" cy="3.5" r="1.7"/><circle cx="4" cy="9.8" r="1.7"/><circle cx="4" cy="15" r="1.7"/></g></svg>
<svg class="a" style="left:1390px;top:409px;" width="16" height="16" viewBox="0 0 16 16"><rect x="2.5" y="2.5" width="10.5" height="10.5" fill="none" stroke="#333" stroke-width="1.4"/></svg>
<svg class="a" style="left:1427px;top:408px;" width="16" height="16" viewBox="0 0 16 16"><path d="M2 2 L14 14 M14 2 L2 14" stroke="#333" stroke-width="1.4"/></svg>
<div class="a" style="left:727px;top:444px;width:193px;height:33px;box-sizing:border-box;border:1px solid #b8a320;border-radius:4px;background:linear-gradient(#ffec4a,#f3d600);box-shadow:0 1px 1.5px rgba(0,0,0,0.3);"></div>
<div class="t" style="left:743.5px;top:450.45px;font-size:16px;line-height:20.0px;color:#333;font-weight:700;">Записать и закрыть</div>
<div class="a" style="left:931px;top:444px;width:102px;height:33px;box-sizing:border-box;border:1px solid #b5b5b5;border-radius:4px;background:linear-gradient(#ffffff,#f1f1f1);box-shadow:0 1px 1.5px rgba(0,0,0,0.28);"></div>
<div class="t" style="left:948px;top:450.79px;font-size:15.65px;line-height:19.562px;color:#404040;">Записать</div>
<div class="a" style="left:1363px;top:444px;width:72px;height:33px;box-sizing:border-box;border:1px solid #b5b5b5;border-radius:4px;background:linear-gradient(#ffffff,#f1f1f1);box-shadow:0 1px 1.5px rgba(0,0,0,0.28);"></div>
<div class="t" style="left:1380.7px;top:450.79px;font-size:15.65px;line-height:19.562px;color:#404040;">Еще</div>
<svg class="a" style="left:1418px;top:459px;" width="9" height="6" viewBox="0 0 9 6"><path d="M0.5 0.5 H8.5 L4.5 5 Z" fill="#444"/></svg>
<div class="t" style="left:726.5px;top:493.79px;font-size:15.65px;line-height:19.562px;color:#555555;">Период:</div>
<div class="t" style="left:726.5px;top:532.79px;font-size:15.65px;line-height:19.562px;color:#555555;">Заказ торговой площадки:</div>
<div class="t" style="left:726.5px;top:571.79px;font-size:15.65px;line-height:19.562px;color:#555555;">Статус:</div>
<div class="t" style="left:726.5px;top:610.79px;font-size:15.65px;line-height:19.562px;color:#555555;">Причина отказа:</div>
<div class="t" style="left:726.5px;top:649.79px;font-size:15.65px;line-height:19.562px;color:#555555;">Идентификатор запроса:</div>
<div class="t" style="left:726.5px;top:688.79px;font-size:15.65px;line-height:19.562px;color:#555555;">Комментарий:</div>
<div class="t" style="left:726.5px;top:727.79px;font-size:15.65px;line-height:19.562px;color:#555555;">Ответственный:</div>
<div class="a" style="left:921px;top:489px;width:255px;height:28px;box-sizing:border-box;border:1px solid #aeaeae;border-radius:3px;background:#fff;"></div>
<div class="a" style="left:1122px;top:490px;width:1px;height:26px;background:#bdbdbd;"></div>
<div class="a" style="left:1148px;top:490px;width:1px;height:26px;background:#bdbdbd;"></div>
<div class="a" style="left:1149px;top:503px;width:10px;height:1px;background:#bdbdbd;"></div>
<svg class="a" style="left:1127px;top:494px;" width="16" height="16" viewBox="0 0 16 16"><g fill="#444"><rect x="1.5" y="2.5" width="12.5" height="12" rx="1"/></g><g fill="#fff"><rect x="3" y="6" width="2" height="2"/><rect x="6.3" y="6" width="2" height="2"/><rect x="9.6" y="6" width="2" height="2"/><rect x="3" y="9.5" width="2" height="2"/><rect x="6.3" y="9.5" width="2" height="2"/><rect x="9.6" y="9.5" width="2" height="2"/></g><g fill="#444"><rect x="3.5" y="1" width="2" height="3" rx="1"/><rect x="10" y="1" width="2" height="3" rx="1"/></g></svg>
<div class="t" style="left:925.3px;top:493.39px;font-size:15.65px;line-height:19.562px;color:#444444;">02.09.2023 15:42:50</div>
<div class="a" style="left:921px;top:528px;width:513px;height:27px;box-sizing:border-box;border:1px solid #aeaeae;border-radius:3px;background:#fff;"></div>
<div class="a" style="left:1381px;top:529px;width:1px;height:25px;background:#bdbdbd;"></div>
<div class="a" style="left:1407px;top:529px;width:1px;height:25px;background:#bdbdbd;"></div>
<svg class="a" style="left:1389px;top:539px;" width="10" height="6" viewBox="0 0 10 6"><path d="M0.8 0.5 H8.2 L4.5 4.5 Z" fill="#444"/></svg>
<svg class="a" style="left:1412px;top:534px;" width="16" height="15" viewBox="0 0 16 15"><g fill="none" stroke="#333" stroke-width="1.2"><rect x="5.5" y="1.5" width="7.5" height="7.5"/><path d="M3.5 5.5 H1.5 V13 H9 V11"/></g></svg>
<div class="t" style="left:925.3px;top:532.29px;font-size:15.65px;line-height:19.562px;color:#444444;">23090343-0343</div>
<div class="a" style="left:918px;top:564px;width:519px;height:34px;box-sizing:border-box;border:2px solid #f8c50a;background:#fff;"></div>
<div class="a" style="left:1407px;top:567px;width:1px;height:28px;background:#bdbdbd;"></div>
<svg class="a" style="left:1415px;top:578px;" width="10" height="6" viewBox="0 0 10 6"><path d="M0.8 0.5 H8.2 L4.5 4.5 Z" fill="#444"/></svg>
<div class="a" style="left:925px;top:572px;width:64px;height:18px;background:#4f67c4;"></div>
<div class="t" style="left:925.3px;top:571.79px;font-size:15.65px;line-height:19.562px;color:#ffffff;">Отменен</div>
<div class="a" style="left:921px;top:607px;width:513px;height:27px;box-sizing:border-box;border:1px solid #aeaeae;border-radius:3px;background:#fff;"></div>
<div class="a" style="left:1381px;top:608px;width:1px;height:25px;background:#bdbdbd;"></div>
<div class="a" style="left:1407px;top:608px;width:1px;height:25px;background:#bdbdbd;"></div>
<svg class="a" style="left:1389px;top:618px;" width="10" height="6" viewBox="0 0 10 6"><path d="M0.8 0.5 H8.2 L4.5 4.5 Z" fill="#444"/></svg>
<svg class="a" style="left:1412px;top:613px;" width="16" height="15" viewBox="0 0 16 15"><g fill="none" stroke="#333" stroke-width="1.2"><rect x="5.5" y="1.5" width="7.5" height="7.5"/><path d="M3.5 5.5 H1.5 V13 H9 V11"/></g></svg>
<div class="a" style="left:921px;top:646px;width:514px;height:27px;box-sizing:border-box;border:1px solid #aeaeae;border-radius:3px;background:#fff;"></div>
<div class="a" style="left:921px;top:685px;width:514px;height:27px;box-sizing:border-box;border:1px solid #aeaeae;border-radius:3px;background:#fff;"></div>
<div class="a" style="left:921px;top:724px;width:513px;height:27px;box-sizing:border-box;border:1px solid #aeaeae;border-radius:3px;background:#fff;"></div>
<div class="a" style="left:1381px;top:725px;width:1px;height:25px;background:#bdbdbd;"></div>
<div class="a" style="left:1407px;top:725px;width:1px;height:25px;background:#bdbdbd;"></div>
<svg class="a" style="left:1389px;top:735px;" width="10" height="6" viewBox="0 0 10 6"><path d="M0.8 0.5 H8.2 L4.5 4.5 Z" fill="#444"/></svg>
<svg class="a" style="left:1412px;top:730px;" width="16" height="15" viewBox="0 0 16 15"><g fill="none" stroke="#333" stroke-width="1.2"><rect x="5.5" y="1.5" width="7.5" height="7.5"/><path d="M3.5 5.5 H1.5 V13 H9 V11"/></g></svg>
<div class="t" style="left:925.3px;top:728.29px;font-size:15.65px;line-height:19.562px;color:#444444;">esavin@rdv-it.ru</div>
<div class="a" style="left:404px;top:218px;width:51px;height:43px;box-sizing:border-box;border:3px solid #fc3a3e;"></div>
<div class="a" style="left:725px;top:434px;width:192px;height:51px;box-sizing:border-box;border:3px solid #fc3a3e;"></div>
<div class="a" style="left:917px;top:485.5px;width:190px;height:29.0px;box-sizing:border-box;border:3px solid #fc3a3e;"></div>
<div class="a" style="left:725px;top:567px;width:715.5px;height:40px;box-sizing:border-box;border:3px solid #fc3a3e;"></div>
<div class="a circ" style="left:454px;top:227px;"><svg width="40" height="40" style="position:absolute;left:0;top:0"><path d="M20.4 10.1 H23.1 V31.2 H19.6 V15.3 L14.8 18.2 V14.6 Z" fill="#fff"/></svg></div>
<div class="a circ" style="left:1157px;top:487px;">2</div>
<div class="a circ" style="left:1408px;top:581px;">3</div>
<div class="a circ" style="left:878px;top:413.5px;">4</div>
</body></html>
